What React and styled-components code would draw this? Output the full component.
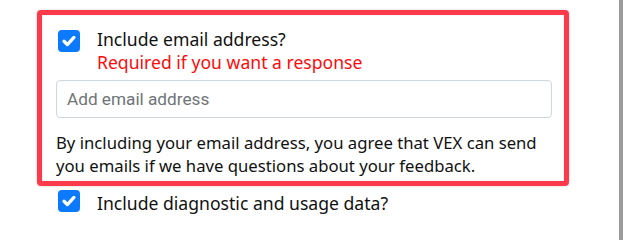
import styled, { createGlobalStyle } from "styled-components";

const GlobalStyle = createGlobalStyle`
  html, body {
    margin: 0;
    padding: 0;
    background: #ffffff;
  }

  body {
    font-family: "Noto Sans", "DejaVu Sans", sans-serif;
    color: #111111;
  }
`;

function CheckMark() {
  return (
    <svg width="22" height="22" viewBox="0 0 20 20" aria-hidden="true">
      <path
        d="m5.5 10.2 3 3 6-6.4"
        fill="none"
        stroke="#ffffff"
        strokeWidth="3"
        strokeLinecap="round"
        strokeLinejoin="round"
      />
    </svg>
  );
}

function App() {
  return (
    <>
      <GlobalStyle />
      <Page>
        <Main>
          <EmailCard>
            <CheckRow $top={13}>
              <Checkbox $offset={2}>
                <CheckMark />
              </Checkbox>
              <LabelGroup>
                <Label>Include email address?</Label>
                <Required>Required if you want a response</Required>
              </LabelGroup>
            </CheckRow>
            <EmailInput type="email" placeholder="Add email address" />
            <Notice>
              By including your email address, you agree that VEX can send
              you emails if we have questions about your feedback.
            </Notice>
          </EmailCard>
          <CheckRow $top={4} $indent={21}>
            <Checkbox $offset={0}>
              <CheckMark />
            </Checkbox>
            <LabelGroup $drop={2}>
              <Label>Include diagnostic and usage data?</Label>
            </LabelGroup>
          </CheckRow>
        </Main>
        <ScrollEdge />
      </Page>
    </>
  );
}

const Page = styled.div`
  display: flex;
  width: 623px;
  height: 240px;
  overflow: hidden;
`;

const Main = styled.main`
  flex: 1;
  padding: 10px 0 0 37px;
`;

const ScrollEdge = styled.div`
  width: 4px;
  height: 100%;
  background: #9b9b9b;
`;

const EmailCard = styled.section`
  box-sizing: border-box;
  width: 532px;
  padding: 0 12px 4px 14px;
  border: 5px solid #fd3a4b;
  border-radius: 4px;
  box-shadow: 0 0 3px rgba(0, 0, 0, 0.18), inset 0 0 2px rgba(0, 0, 0, 0.12);
`;

const CheckRow = styled.div`
  display: flex;
  align-items: flex-start;
  gap: 17px;
  padding-top: ${(p) => p.$top}px;
  padding-left: ${(p) => p.$indent || 2}px;
`;

const Checkbox = styled.span`
  display: flex;
  flex: none;
  align-items: center;
  justify-content: center;
  width: 22px;
  height: 22px;
  margin-top: ${(p) => p.$offset}px;
  border-radius: 4px;
  background: #0b7aff;
`;

const LabelGroup = styled.div`
  display: flex;
  flex-direction: column;
  padding-top: ${(p) => p.$drop || 0}px;
`;

const Label = styled.span`
  font-size: 17.6px;
  line-height: 23px;
  color: #111111;
`;

const Required = styled.span`
  font-size: 17.6px;
  line-height: 23px;
  color: #ff0a0a;
`;

const EmailInput = styled.input`
  box-sizing: border-box;
  display: block;
  width: 100%;
  height: 38px;
  margin-top: 6px;
  padding: 0 10px;
  border: 1px solid #cfd6de;
  border-radius: 4px;
  font-family: Roboto, "Liberation Sans", sans-serif;
  font-size: 17.2px;
  color: #222222;
  background: #ffffff;
  outline: none;

  &::placeholder {
    color: #6f7478;
  }
`;

const Notice = styled.p`
  margin: 13px 0 0;
  font-size: 16.7px;
  line-height: 23px;
  color: #111111;
`;

export default App;
